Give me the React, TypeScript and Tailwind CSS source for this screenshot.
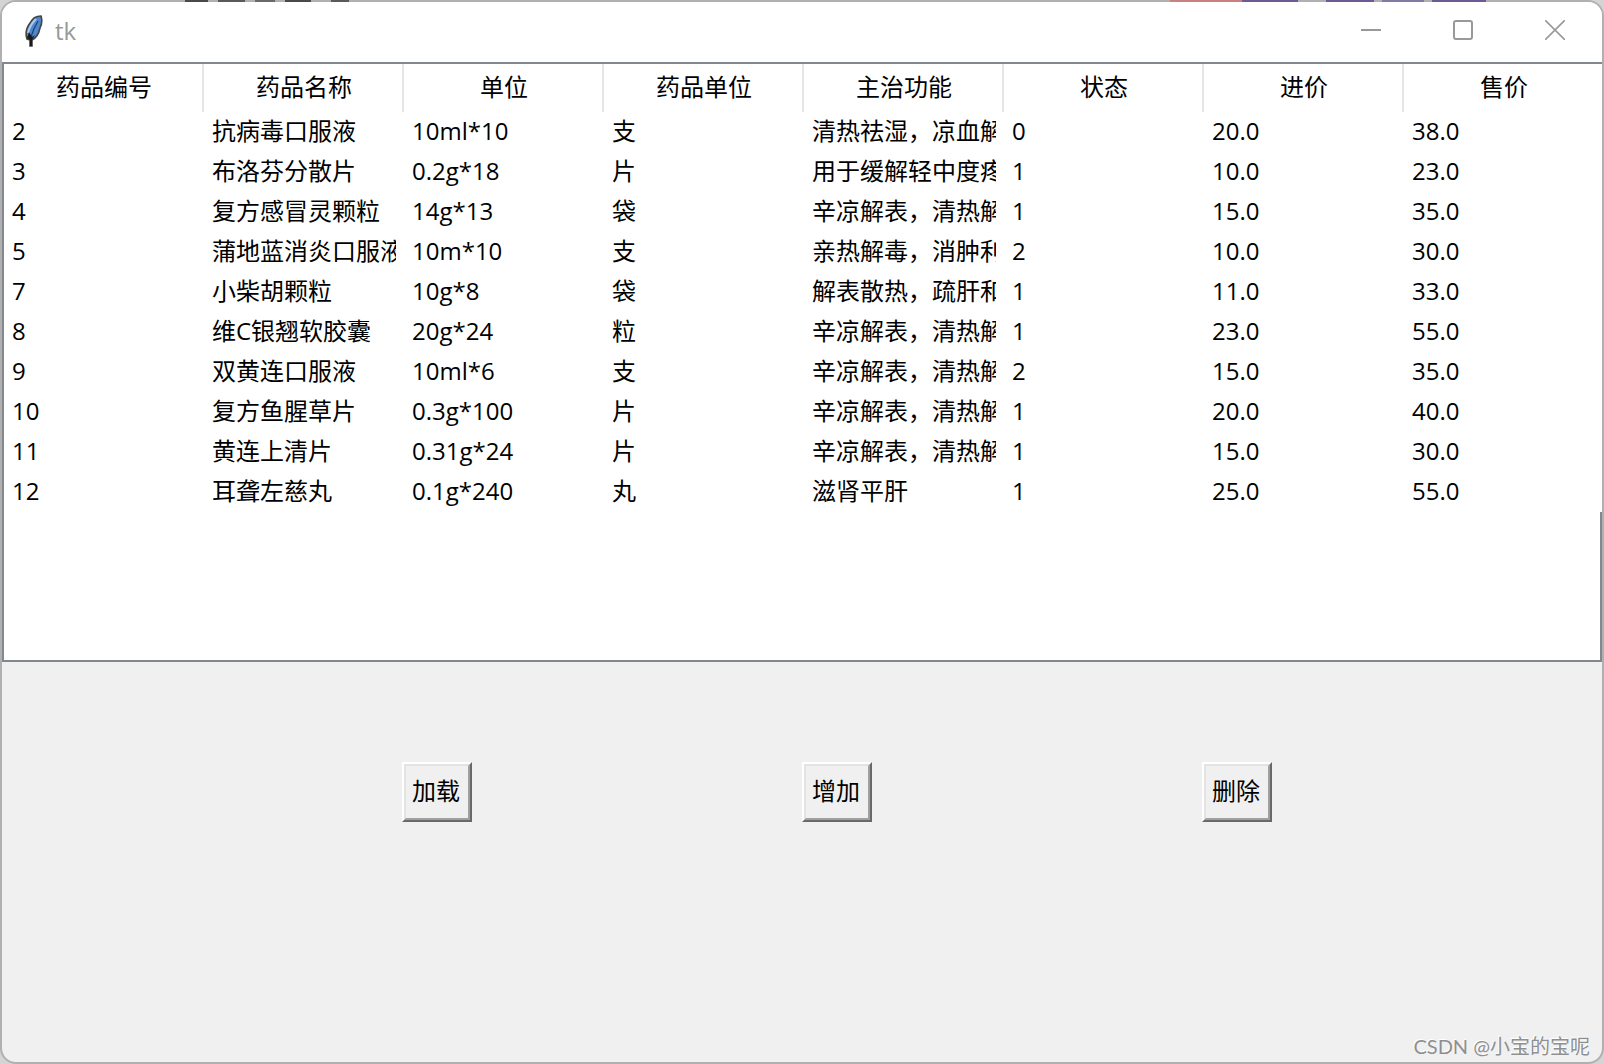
import React from 'react';

interface Medicine {
  id: number;
  name: string;
  spec: string;
  unit: string;
  usage: string;
  status: number;
  cost: string;
  price: string;
}

const columns = ['药品编号', '药品名称', '单位', '药品单位', '主治功能', '状态', '进价', '售价'];

const medicines: Medicine[] = [
  { id: 2, name: '抗病毒口服液', spec: '10ml*10', unit: '支', usage: '清热祛湿，凉血解', status: 0, cost: '20.0', price: '38.0' },
  { id: 3, name: '布洛芬分散片', spec: '0.2g*18', unit: '片', usage: '用于缓解轻中度疼', status: 1, cost: '10.0', price: '23.0' },
  { id: 4, name: '复方感冒灵颗粒', spec: '14g*13', unit: '袋', usage: '辛凉解表，清热解', status: 1, cost: '15.0', price: '35.0' },
  { id: 5, name: '蒲地蓝消炎口服液', spec: '10m*10', unit: '支', usage: '亲热解毒，消肿利', status: 2, cost: '10.0', price: '30.0' },
  { id: 7, name: '小柴胡颗粒', spec: '10g*8', unit: '袋', usage: '解表散热，疏肝和', status: 1, cost: '11.0', price: '33.0' },
  { id: 8, name: '维C银翘软胶囊', spec: '20g*24', unit: '粒', usage: '辛凉解表，清热解', status: 1, cost: '23.0', price: '55.0' },
  { id: 9, name: '双黄连口服液', spec: '10ml*6', unit: '支', usage: '辛凉解表，清热解', status: 2, cost: '15.0', price: '35.0' },
  { id: 10, name: '复方鱼腥草片', spec: '0.3g*100', unit: '片', usage: '辛凉解表，清热解', status: 1, cost: '20.0', price: '40.0' },
  { id: 11, name: '黄连上清片', spec: '0.31g*24', unit: '片', usage: '辛凉解表，清热解', status: 1, cost: '15.0', price: '30.0' },
  { id: 12, name: '耳聋左慈丸', spec: '0.1g*240', unit: '丸', usage: '滋肾平肝', status: 1, cost: '25.0', price: '55.0' },
];

const FeatherIcon = () => (
  <svg width="20" height="32" viewBox="0 0 20 32" aria-hidden="true">
    <path d="M17 1 C12 1 8 4 6 8 C3 12 1 18 3 24 L6 25 L6 31 L8 31 L8 25 C12 23 15 18 16 13 C18 9 18 4 17 1 Z" fill="#4d87cf" stroke="#444" strokeWidth="1.6" />
    <path d="M12 4 C8 8 5 13 4 18" fill="none" stroke="#a9cbee" strokeWidth="2" />
    <path d="M14 6 C11 11 9 15 7 22" fill="none" stroke="#1f3f66" strokeWidth="1.2" />
    <path d="M5 17 L3 23 L6 25 L6 31 L8 31 L8 25 L11 20 L8 22 Z" fill="#1a1a1a" />
  </svg>
);

const TitleBar = () => (
  <header className="flex h-[60px] items-center justify-between bg-white text-[#999999]">
    <div className="flex items-center gap-[11px] pb-0.5 pl-[22px]">
      <FeatherIcon />
      <h1 className="text-2xl leading-8">tk</h1>
    </div>
    <div className="flex h-full pr-px">
      <button aria-label="Minimize" className="flex w-[92px] items-center justify-center pb-1">
        <svg width="20" height="20" viewBox="0 0 20 20" fill="none" stroke="currentColor" strokeWidth="2">
          <path d="M0 10h20" />
        </svg>
      </button>
      <button aria-label="Maximize" className="flex w-[92px] items-center justify-center pb-1">
        <svg width="20" height="20" viewBox="0 0 20 20" fill="none" stroke="currentColor" strokeWidth="2">
          <rect x="1" y="1" width="18" height="18" rx="2" />
        </svg>
      </button>
      <button aria-label="Close" className="flex w-[92px] items-center justify-center pb-1">
        <svg width="20" height="20" viewBox="0 0 20 20" fill="none" stroke="currentColor" strokeWidth="1.6">
          <path d="M0 0l20 20M20 0L0 20" />
        </svg>
      </button>
    </div>
  </header>
);

const Cell = ({ children }: { children: React.ReactNode }) => (
  <td className="h-10 px-2 pt-0 pb-0.5">
    <div className="overflow-hidden whitespace-nowrap leading-9">{children}</div>
  </td>
);

const MedicineTable = () => (
  <div className="h-[600px] border-2 border-[#828790] bg-white">
    {/* the columns are slightly wider than the frame and run over its right edge */}
    <table className="w-[calc(100%+4px)] table-fixed border-collapse bg-white text-2xl">
      <thead>
        <tr>
          {columns.map((column) => (
            <th key={column} className="h-12 p-0 font-normal">
              <div className="flex h-12 items-center justify-center border-r-2 border-[#e5e5e5] pb-0.5 pl-0.5 leading-8">{column}</div>
            </th>
          ))}
        </tr>
      </thead>
      <tbody>
        {medicines.map((item) => (
          <tr key={item.id}>
            <Cell>{item.id}</Cell>
            <Cell>{item.name}</Cell>
            <Cell>{item.spec}</Cell>
            <Cell>{item.unit}</Cell>
            <Cell>{item.usage}</Cell>
            <Cell>{item.status}</Cell>
            <Cell>{item.cost}</Cell>
            <Cell>{item.price}</Cell>
          </tr>
        ))}
      </tbody>
    </table>
  </div>
);

const TkButton = ({ children }: { children: React.ReactNode }) => (
  <button className="w-[70px] border-2 border-t-white border-l-white border-r-[#696969] border-b-[#696969]">
    <span className="flex h-14 items-center justify-center border-2 border-t-[#e3e3e3] border-l-[#e3e3e3] border-r-[#a0a0a0] border-b-[#a0a0a0] pr-0.5 pb-0.5 text-2xl leading-8">
      {children}
    </span>
  </button>
);

// slivers of the window behind, showing above the title bar
const BackdropEdge = () => (
  <div aria-hidden="true" className="absolute inset-x-0 top-0 flex h-0.5 justify-between pr-[118px] pl-[185px]">
    <div className="flex gap-2.5">
      <span className="w-[23px] bg-[#4a4848]" />
      <span className="w-[27px] bg-[#5a5858]" />
      <span className="w-[20px] bg-[#6a6868]" />
      <span className="w-[26px] bg-[#4a4848]" />
      <span className="ml-2.5 w-[18px] bg-[#5a5858]" />
    </div>
    <div className="flex">
      <span className="w-[72px] bg-[#c98080]" />
      <span className="w-[56px] bg-[#6b5a94]" />
      <span className="ml-7 w-[48px] bg-[#6b5a94]" />
      <span className="ml-2 w-[42px] bg-[#8478a4]" />
      <span className="ml-2 w-[54px] bg-[#6b5a94]" />
    </div>
  </div>
);

export default function App() {
  return (
    <div className="relative flex min-h-screen flex-col bg-[#d4d4d4] font-['Open_Sans','Noto_Sans_CJK_SC',sans-serif] text-black">
      <main className="flex grow flex-col overflow-hidden rounded-2xl border-2 border-[#b0b0b0] bg-[#f0f0f0]">
        <TitleBar />
        <MedicineTable />
        <div className="grid grid-cols-4 pt-[100px]">
          <div className="col-start-2">
            <TkButton>加载</TkButton>
          </div>
          <div>
            <TkButton>增加</TkButton>
          </div>
          <div>
            <TkButton>删除</TkButton>
          </div>
        </div>
        <footer className="mt-auto pr-3 pb-0.5 text-right font-['Lato','Noto_Sans_CJK_SC',sans-serif] text-xl leading-7 text-[#8f8f8f] [text-shadow:-1px_-1px_0_#ffffff]">
          CSDN @小宝的宝呢
        </footer>
      </main>
      <BackdropEdge />
    </div>
  );
}
